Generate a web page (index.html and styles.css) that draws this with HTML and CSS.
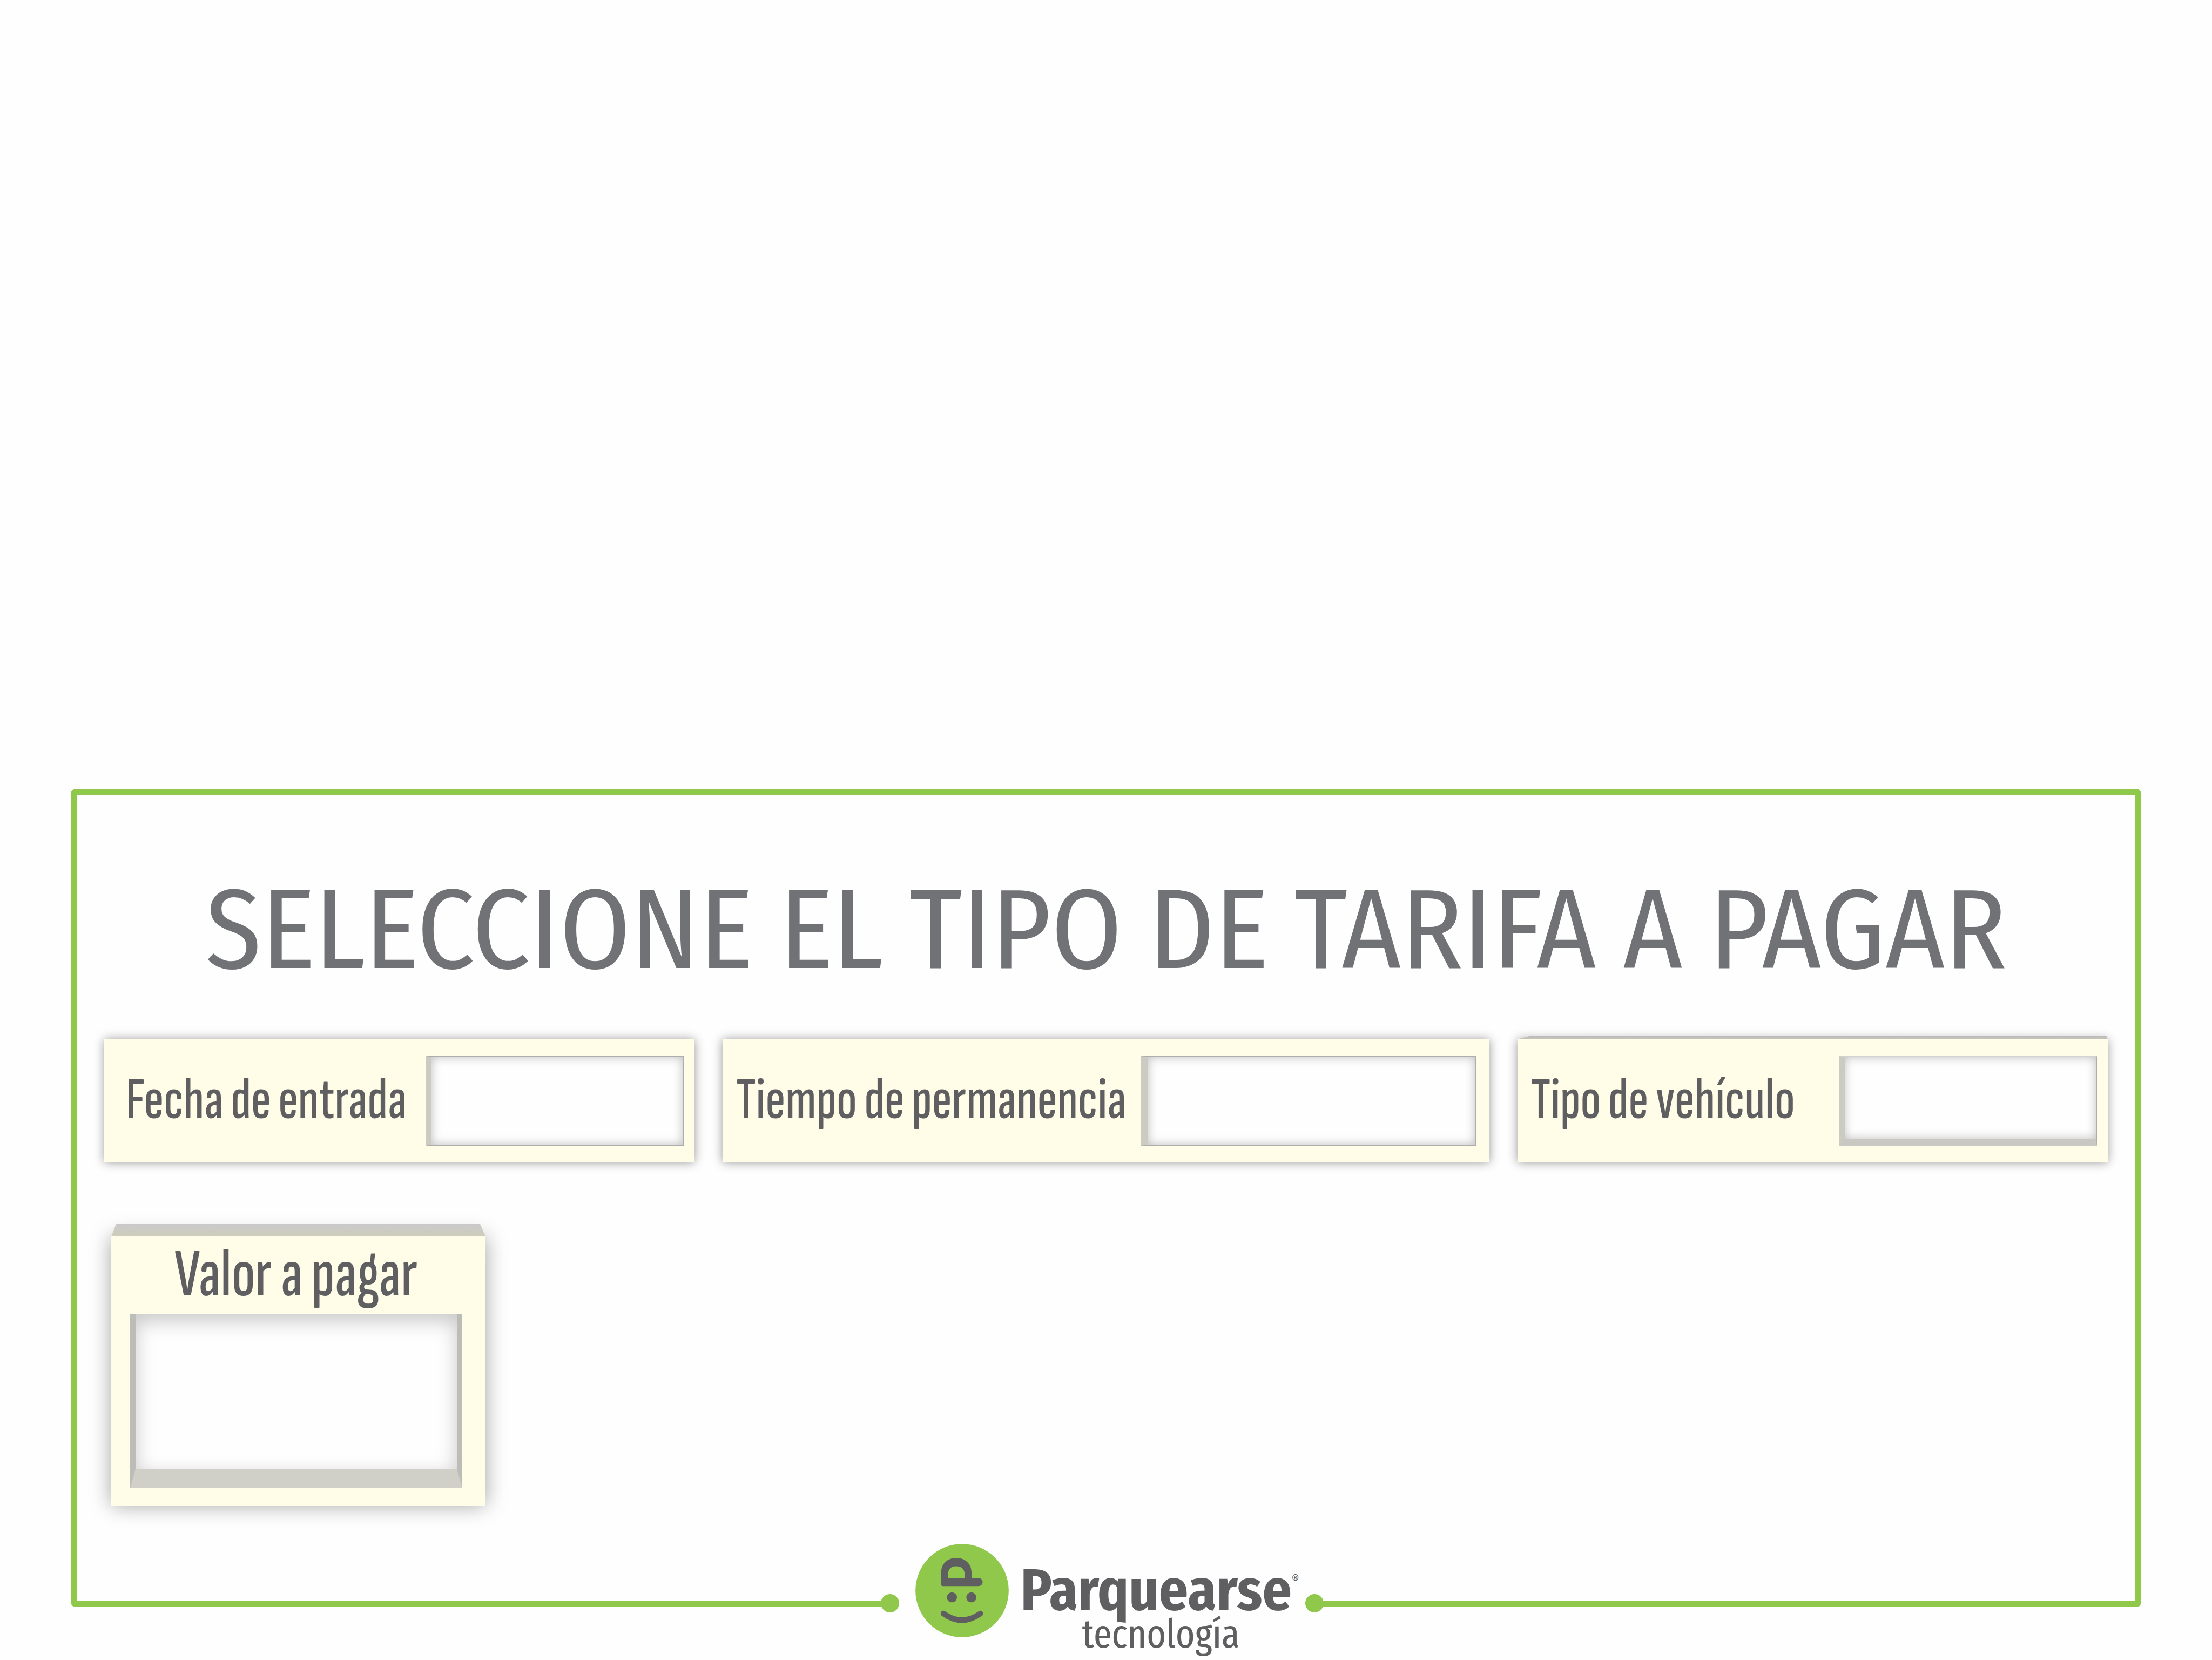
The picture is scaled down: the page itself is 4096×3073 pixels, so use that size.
FILE: index.html
```html
<!DOCTYPE html>
<html lang="es">
<head>
<meta charset="utf-8">
<title>Parquearse tecnología</title>
<link rel="stylesheet" href="styles.css">
</head>
<body>
<main class="screen">
  <form class="panel">
    <h1 class="title">SELECCIONE EL TIPO DE TARIFA A PAGAR</h1>
    <div class="fields">
      <div class="card card-entry">
        <label class="label" for="entrada">Fecha de entrada</label>
        <input class="box" id="entrada" type="text">
      </div>
      <div class="card card-stay">
        <label class="label" for="permanencia">Tiempo de permanencia</label>
        <input class="box box-wide" id="permanencia" type="text">
      </div>
      <div class="card card-vehicle bevel">
        <label class="label" for="vehiculo">Tipo de vehículo</label>
        <input class="box box-deep" id="vehiculo" type="text">
      </div>
    </div>
    <div class="total bevel">
      <label class="label label-total" for="valor">Valor a pagar</label>
      <input class="box box-total" id="valor" type="text">
    </div>
  </form>
</main>
<footer class="footer">
  <div class="rail rail-left"></div>
  <div class="brand">
    <svg class="logo" viewBox="60 51 537 538" aria-hidden="true">
      <circle cx="328.500" cy="320" r="268.500" fill="#8fc84a"/>
      <path fill="#5f5f61" fill-rule="evenodd" d="M208 285V217C208 165 245 132 295 132S383 165 383 217V248H424A23 23 0 0 1 424 294H218Q208 294 208 285ZM248 248H343V225C343 196 324 180 295 180S248 196 248 225Z"/>
      <circle cx="270" cy="359" r="29" fill="#5f5f61"/>
      <circle cx="382" cy="359" r="29" fill="#5f5f61"/>
      <path d="M221 452Q327 528 434 452" fill="none" stroke="#5f5f61" stroke-width="32" stroke-linecap="round"/>
    </svg>
    <div class="wordmark">
      <div class="name">Parquearse<sup class="mark">®</sup></div>
      <div class="tagline">tecnología</div>
    </div>
  </div>
  <div class="rail rail-right"></div>
</footer>
</body>
</html>
```
FILE: styles.css
```css
:root {
  --green: #8fc84a;
  --ink: #5f5f61;
  --cream: #fffce8;
  --paper: #fefefe;
}

* {
  box-sizing: border-box;
}

body {
  display: flex;
  flex-direction: column;
  min-height: 100vh;
  margin: 0;
  background: var(--paper);
  color: var(--ink);
  font-family: "Sofia Sans Extra Condensed", "Open Sans Condensed", "Roboto", sans-serif;
}

.screen {
  display: flex;
  flex: 1;
  flex-direction: column;
  justify-content: flex-end;
  padding: 0 132px;
}

.panel {
  padding: 130px 50px 71px;
  border: 11px solid var(--green);
  border-bottom: 0;
  border-radius: 6px 6px 0 0;
}

.title {
  margin: 0 0 82px;
  color: #717276;
  font: 400 210px/240px "Fira Sans Condensed", "Barlow Semi Condensed", "Roboto", sans-serif;
  text-align: center;
  white-space: nowrap;
}

.fields {
  display: grid;
  grid-template-columns: 1093fr 1419fr 1093fr;
  gap: 52px;
  margin-bottom: 137px;
}

.card,
.total {
  position: relative;
  background: var(--cream);
}

.card {
  display: flex;
  align-items: center;
  justify-content: space-between;
  height: 228px;
  padding: 0 20px 0 25px;
  box-shadow: 0 0 18px rgba(0, 0, 0, 0.4);
}

.card-entry {
  padding-left: 40px;
}

.card-stay {
  padding-right: 25px;
}

.label {
  font-size: 109px;
  font-weight: 500;
  line-height: 120px;
  white-space: nowrap;
}

.box {
  width: 477px;
  height: 166px;
  padding: 0 20px;
  border: 2px solid #adadad;
  border-left: 10px solid #cbcbc1;
  border-radius: 0;
  outline: 0;
  background: var(--paper);
  box-shadow: inset 0 0 18px rgba(0, 0, 0, 0.26);
  color: var(--ink);
  font: inherit;
  font-size: 109px;
}

.box-wide {
  width: 621px;
  border-left-width: 14px;
}

.box-deep {
  border-top-color: #d2d2d2;
  border-bottom: 13px solid #c9c8c2;
}

/* Upper face of a raised card */
.bevel::before {
  content: "";
  position: absolute;
  right: 0;
  bottom: 100%;
  left: 0;
  height: 7px;
  background: linear-gradient(#b9b9b9, #c8c6ba);
  clip-path: polygon(26px 0, calc(100% - 3px) 0, 100% 100%, 0 100%);
}

.total {
  display: flex;
  flex-direction: column;
  width: 693px;
  height: 498px;
  margin-left: 13px;
  padding: 0 43px 32px 35px;
  box-shadow: 0 0 36px rgba(0, 0, 0, 0.36);
}

.total::before {
  height: 23px;
  background: linear-gradient(#c9c9cb, #cfcdbc);
  clip-path: polygon(9px 0, calc(100% - 10px) 0, 100% 100%, 0 100%);
}

.label-total {
  font-size: 126px;
  line-height: 144px;
  text-align: center;
}

.box-total {
  flex: 1;
  width: 100%;
  border: 10px solid #bcbcb8;
  border-top: 0;
  border-bottom: 36px solid #d0cfc8;
  box-shadow: inset 0 12px 36px rgba(0, 0, 0, 0.22);
}

.footer {
  display: grid;
  grid-template-columns: 1516fr 786px 1531fr;
  height: 215px;
  padding: 0 132px;
}

.rail {
  position: relative;
  height: 116px;
  border-bottom: 11px solid var(--green);
}

.rail-left {
  border-left: 11px solid var(--green);
  border-radius: 0 0 0 6px;
}

.rail-right {
  border-right: 11px solid var(--green);
  border-radius: 0 0 6px 0;
}

/* Round end caps of the frame line */
.rail::after {
  content: "";
  position: absolute;
  bottom: -22px;
  width: 34px;
  height: 34px;
  border-radius: 50%;
  background: var(--green);
}

.rail-left::after {
  right: -17px;
}

.rail-right::after {
  left: -17px;
}

.brand {
  display: flex;
  gap: 22px;
  padding-left: 47px;
}

.logo {
  flex: none;
  width: 173px;
  height: 173px;
}

.wordmark {
  padding-top: 36px;
  white-space: nowrap;
}

.name {
  display: flex;
  font: 700 107px/100px "Fira Sans Condensed", "Roboto", sans-serif;
}

.mark {
  font-size: 24px;
  font-weight: 400;
  line-height: 60px;
}

.tagline {
  padding-left: 4px;
  font: 400 74px/64px "Fira Sans Extra Condensed", "Roboto", sans-serif;
  text-align: center;
}
```
